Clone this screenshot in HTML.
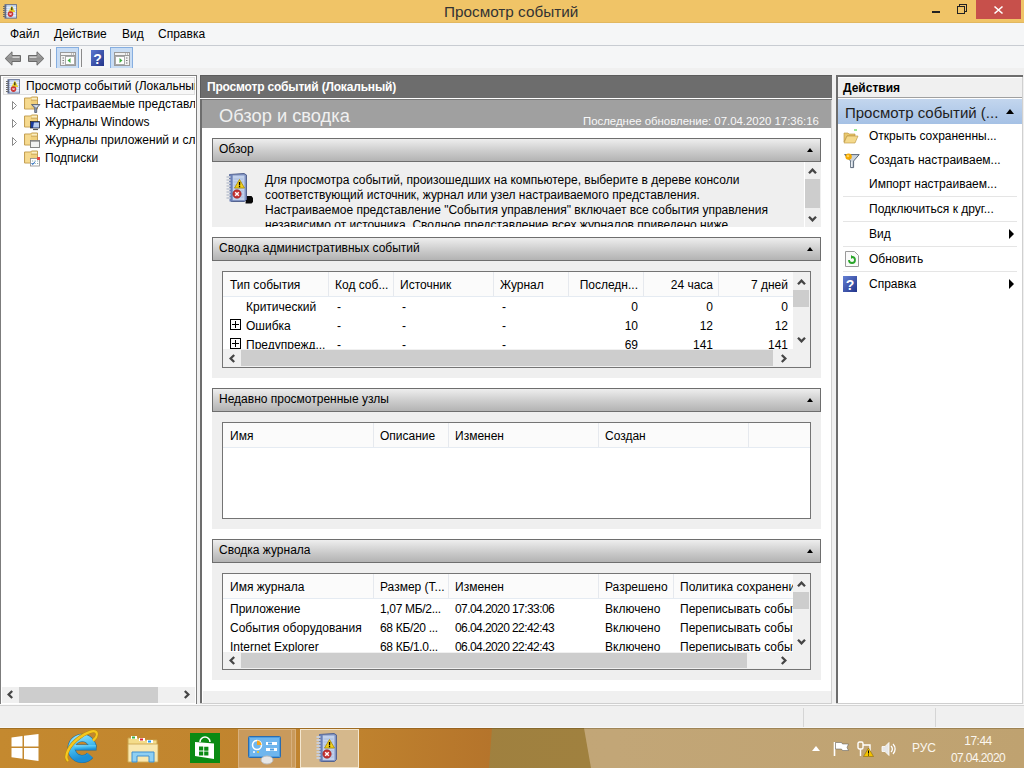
<!DOCTYPE html>
<html><head><meta charset="utf-8">
<style>
*{box-sizing:border-box;margin:0;padding:0}
html,body{width:1024px;height:768px;overflow:hidden;background:#f0f0f0;font-family:"Liberation Sans",sans-serif;font-size:12px;color:#000}
.a{position:absolute}
.t{position:absolute;white-space:nowrap;line-height:14px}
svg{position:absolute;overflow:visible}
.sh{position:absolute;left:212px;width:609px;height:24px;border:1px solid #6e6e6e;background:linear-gradient(#eeeeee,#c9c9c9 60%,#b3b3b3)}
.tri{position:absolute;width:0;height:0;border-left:3.5px solid transparent;border-right:3.5px solid transparent;border-bottom:4px solid #000;margin-left:1px}
.csep{position:absolute;width:1px;height:24px;background:#e6e9ee}
.hdrline{position:absolute;height:1px;background:#e5ebf2}
.r{text-align:right}
.rsep{position:absolute;left:843px;width:174px;height:1px;background:#e5e5e5}
.plus{position:absolute;width:11px;height:11px;border:1px solid #000}
.plus:before{content:"";position:absolute;left:1px;top:4px;width:7px;height:1px;background:#000}
.plus:after{content:"";position:absolute;left:4px;top:1px;width:1px;height:7px;background:#000}

</style></head><body>


<svg width="0" height="0" style="position:absolute">
<defs>
<symbol id="ev" viewBox="0 0 32 32">
 <path d="M5.5 2.5 L20 1.5 L22.5 3 L22.5 27.5 L20.5 29.5 L7 29.5 Z" fill="#8193c2" stroke="#55648f" stroke-width="1"/>
 <rect x="8.5" y="3.5" width="12" height="24.5" fill="#c2d1eb"/>
 <path d="M9.5 7h10M9.5 10h10M9.5 13h10M9.5 16h10M9.5 19h10M9.5 22h10M9.5 25h10" stroke="#a5b7d8" stroke-width="0.8"/>
 <rect x="5.5" y="2.5" width="3" height="27" fill="#6b80b6"/>
 <path d="M2.5 5h4M2.5 8h4M2.5 11h4M2.5 14h4M2.5 17h4M2.5 20h4M2.5 23h4M2.5 26h4" stroke="#c9ced8" stroke-width="1.8"/>
 <path d="M15.5 7.5 L20.5 16 H10.5 Z" fill="#f2d01c" stroke="#a88a00" stroke-width="0.8" stroke-linejoin="round"/>
 <rect x="14.9" y="10" width="1.3" height="3.4" fill="#000"/><rect x="14.9" y="14" width="1.3" height="1.2" fill="#000"/>
 <circle cx="13" cy="22" r="4.2" fill="#c73434" stroke="#8d1a1a" stroke-width="0.6"/>
 <path d="M11.2 20.2l3.6 3.6M14.8 20.2l-3.6 3.6" stroke="#fff" stroke-width="1.4"/>
</symbol>
<symbol id="ev16" viewBox="0 0 16 16">
 <rect x="2.5" y="1.2" width="12.4" height="14.4" fill="#5b6990"/>
 <rect x="4.4" y="2.1" width="9.7" height="12.6" fill="#c9d9f2"/>
 <path d="M4.4 4.6h9.7M4.4 6.6h9.7M4.4 8.6h9.7M4.4 10.6h9.7M4.4 12.6h9.7" stroke="#f2f6fd" stroke-width="0.8"/>
 <path d="M1 3.5h2.6M1 5.5h2.6M1 7.5h2.6M1 9.5h2.6M1 11.5h2.6M1 13.5h2.6" stroke="#6e6e6e" stroke-width="1"/>
 <path d="M9.8 2.4L13.2 8.9H6.4Z" fill="#e6d02a"/>
 <rect x="9.3" y="4.2" width="1.1" height="3" fill="#111"/>
 <circle cx="8.5" cy="11.1" r="2.8" fill="#c83636"/>
 <path d="M7.5 10.1l2 2M9.5 10.1l-2 2" stroke="#fde" stroke-width="1"/>
</symbol>
<symbol id="fold" viewBox="0 0 16 16">
 <path d="M0.5 1.5H6.5L7.5 0.5H13.5V12.5H0.5Z" fill="#f0d07c" stroke="#c39f55"/>
 <path d="M7.8 1.3H13V3.3H7.8Z" fill="#faeec4"/>
 <path d="M7 3.7H13.5" stroke="#c8a55c" stroke-width="0.9"/>
 <rect x="1.3" y="2.3" width="5.5" height="9.5" fill="#f6da90"/>
</symbol>
<symbol id="help" viewBox="0 0 14 16">
 <defs><linearGradient id="hg2" x1="0" y1="0" x2="1" y2="1"><stop offset="0" stop-color="#6480d4"/><stop offset="1" stop-color="#22348a"/></linearGradient></defs>
 <rect x="0" y="0" width="14" height="16" fill="url(#hg2)"/>
 <text x="7" y="13.5" font-family="Liberation Sans" font-size="14" font-weight="bold" fill="#fff" text-anchor="middle">?</text>
</symbol>

<symbol id="cu" viewBox="0 0 9 6"><path d="M1 5.2L4.5 1.6L8 5.2" fill="none" stroke="#454545" stroke-width="2.3"/></symbol>
<symbol id="cd" viewBox="0 0 9 6"><path d="M1 0.8L4.5 4.4L8 0.8" fill="none" stroke="#454545" stroke-width="2.3"/></symbol>
<symbol id="cl" viewBox="0 0 6 9"><path d="M5.2 1L1.6 4.5L5.2 8" fill="none" stroke="#454545" stroke-width="2.3"/></symbol>
<symbol id="cr" viewBox="0 0 6 9"><path d="M0.8 1L4.4 4.5L0.8 8" fill="none" stroke="#454545" stroke-width="2.3"/></symbol>
</defs></svg>

<!-- TITLE BAR -->
<div class="a" style="left:0;top:0;width:1024px;height:23px;background:#f0c467;border-bottom:1px solid #e2b860"></div>
<div class="t" style="left:444px;top:3px;font-size:15.3px;line-height:17px;color:#333">Просмотр событий</div>


<svg style="left:2px;top:3px" width="16" height="16" viewBox="0 0 16 16"><use href="#ev16"/></svg>
<div class="a" style="left:932px;top:11px;width:8px;height:2px;background:#222"></div>
<div class="a" style="left:959px;top:4px;width:8px;height:8px;border:1.5px solid #222"></div>
<div class="a" style="left:957px;top:6px;width:8px;height:8px;border:1.5px solid #222;background:#f0c467"></div>
<div class="a" style="left:976px;top:0;width:45px;height:19px;background:#c7504b"></div>
<svg style="left:994px;top:6px" width="9" height="8"><path d="M0.5 0.5L8.5 7.5M8.5 0.5L0.5 7.5" stroke="#fff" stroke-width="1.6"/></svg>

<!-- MENU BAR -->
<div class="a" style="left:0;top:23px;width:1024px;height:22px;background:#f5f6f7"></div>
<div class="t" style="left:10px;top:27px">Файл</div>
<div class="t" style="left:54px;top:27px">Действие</div>
<div class="t" style="left:122px;top:27px">Вид</div>
<div class="t" style="left:158px;top:27px">Справка</div>
<div class="a" style="left:0;top:45px;width:1024px;height:1px;background:#c8ccd2"></div>

<!-- TOOLBAR -->
<div class="a" style="left:0;top:46px;width:1024px;height:22px;background:#f5f6f7"></div>


<svg style="left:4px;top:50px" width="18" height="17" viewBox="0 0 18 17"><defs><linearGradient id="ag" x1="0" y1="0" x2="0" y2="1"><stop offset="0" stop-color="#b8b8b8"/><stop offset="0.5" stop-color="#8e8e8e"/><stop offset="1" stop-color="#a8a8a8"/></linearGradient></defs><path d="M1.2 8.5L8 1.8V5.5H16.5V11.5H8V15.2Z" fill="url(#ag)" stroke="#6a6a6a" stroke-width="1" stroke-linejoin="round"/><path d="M8.5 6.5H15.5V8H8.5Z" fill="#d0d0d0"/></svg>
<svg style="left:27px;top:50px" width="18" height="17" viewBox="0 0 18 17"><path d="M16.8 8.5L10 1.8V5.5H1.5V11.5H10V15.2Z" fill="url(#ag)" stroke="#6a6a6a" stroke-width="1" stroke-linejoin="round"/><path d="M9.5 6.5H2.5V8H9.5Z" fill="#d0d0d0"/></svg>
<div class="a" style="left:50px;top:49px;width:1px;height:18px;background:#8a8a8a"></div>
<div class="a" style="left:56px;top:47px;width:23px;height:22px;background:#c9ddf4;border:1px solid #86aee0"></div>
<svg style="left:60px;top:52px" width="16" height="14" viewBox="0 0 16 14"><rect x="0.5" y="0.5" width="15" height="13" fill="#f2f2f2" stroke="#9a9a9a"/><path d="M1 3.5H15" stroke="#9a9a9a"/><path d="M11 2h1M13 2h1" stroke="#8a8a8a"/><rect x="5.5" y="4.5" width="9" height="8" fill="#fff" stroke="#aaa"/><path d="M2.5 6h1.5M2.5 8.5h1.5M2.5 11h1.5" stroke="#7a7a7a"/><path d="M10.5 6L7.5 8.5L10.5 11Z" fill="#3fae3f"/></svg>
<div class="a" style="left:81px;top:49px;width:1px;height:18px;background:#8a8a8a"></div>
<svg style="left:91px;top:50px" width="13" height="16" viewBox="0 0 13 16"><defs><linearGradient id="hg" x1="0" y1="0" x2="1" y2="1"><stop offset="0" stop-color="#5c78d0"/><stop offset="1" stop-color="#22348a"/></linearGradient></defs><rect x="0" y="0" width="13" height="16" fill="url(#hg)"/><text x="6.5" y="13.5" font-family="Liberation Sans" font-size="14" font-weight="bold" fill="#fff" text-anchor="middle">?</text></svg>
<div class="a" style="left:110px;top:47px;width:23px;height:22px;background:#c9ddf4;border:1px solid #86aee0"></div>
<svg style="left:114px;top:52px" width="16" height="14" viewBox="0 0 16 14"><rect x="0.5" y="0.5" width="15" height="13" fill="#f2f2f2" stroke="#9a9a9a"/><path d="M1 3.5H15" stroke="#9a9a9a"/><path d="M11 2h1M13 2h1" stroke="#8a8a8a"/><rect x="1.5" y="4.5" width="9" height="8" fill="#fff" stroke="#aaa"/><path d="M12 6h1.5M12 8.5h1.5M12 11h1.5" stroke="#7a7a7a"/><path d="M5.5 6L8.5 8.5L5.5 11Z" fill="#3fae3f"/></svg>
<div class="a" style="left:0;top:68px;width:1024px;height:7px;background:#f0f0f0"></div>

<!-- PANELS -->
<!-- left -->
<div class="a" style="left:0px;top:75px;width:197px;height:630px;background:#fff;border:1px solid #7c7c7c"></div>

<div class="a" style="left:3px;top:77px;width:192px;height:18px;border:1px solid #dedede;background:#f7f7f7"></div>
<svg style="left:5px;top:78px" width="16" height="16" viewBox="0 0 16 16"><use href="#ev16"/></svg>
<div class="a" style="left:26px;top:77px;width:169px;height:18px;overflow:hidden"><div class="t" style="left:0;top:2px">Просмотр событий (Локальный)</div></div>
<div class="a" style="left:20px;top:95px;width:175px;height:72px;overflow:hidden">
 <div class="t" style="left:25px;top:2px">Настраиваемые представления</div>
 <div class="t" style="left:25px;top:20px">Журналы Windows</div>
 <div class="t" style="left:25px;top:38px">Журналы приложений и служб</div>
 <div class="t" style="left:25px;top:56px">Подписки</div>
</div>
<svg style="left:12px;top:101px" width="6" height="50"><path d="M0.5 0.5L4.5 4.5L0.5 8.5Z M0.5 18.5L4.5 22.5L0.5 26.5Z M0.5 36.5L4.5 40.5L0.5 44.5Z" fill="none" stroke="#8a8a8a"/></svg>
<svg style="left:24px;top:96px" width="16" height="17" viewBox="0 0 16 17"><use href="#fold"/><path d="M7.5 8.5h8.5l-3.3 3.6v4.4h-2v-4.4z" fill="#8e9bb0" stroke="#4f5a6e" stroke-width="0.8"/><path d="M9 9.3h5.5l-2 2.2" fill="#dfe6f0"/></svg>
<svg style="left:24px;top:114px" width="16" height="17" viewBox="0 0 16 17"><use href="#fold"/><rect x="6.5" y="7.5" width="9" height="6.5" fill="#1a3a9a" stroke="#222" stroke-width="0.7"/><path d="M10 8.5h5v5h-6z" fill="#b8cdf0"/><path d="M9 15.5h5" stroke="#555" stroke-width="1.2"/></svg>
<svg style="left:24px;top:132px" width="16" height="17" viewBox="0 0 16 17"><use href="#fold"/><rect x="6.5" y="8.5" width="9" height="7" fill="#f2f2f2" stroke="#7a7a7a" stroke-width="0.9"/><path d="M7 9.3h8" stroke="#9a9a9a"/></svg>
<svg style="left:24px;top:150px" width="16" height="17" viewBox="0 0 16 17"><use href="#fold"/><rect x="6.5" y="8.5" width="9" height="7.5" fill="#fff" stroke="#8a8a8a" stroke-width="0.8"/><rect x="13" y="7" width="3" height="3" fill="#e04848"/><path d="M8 11h1.2M10.5 11h1.2M13 11h1.2M8 13.5h1.2M10.5 13.5h1.2M13 13.5h1.2" stroke="#8aa"/><path d="M7.5 13l1.2 1.6l2.3-3" stroke="#2a6fcf" fill="none" stroke-width="1"/></svg>
<!-- left hscroll -->
<div class="a" style="left:2px;top:687px;width:193px;height:16px;background:#f0f0f0"></div>
<div class="a" style="left:19px;top:687px;width:139px;height:16px;background:#cdcdcd"></div>
<svg style="left:7px;top:690px" width="6" height="9"><use href="#cl"/></svg>
<svg style="left:184px;top:690px" width="6" height="9"><use href="#cr"/></svg>

<!-- center -->
<div class="a" style="left:200px;top:75px;width:632px;height:23px;background:#6d6d6d;border-top:1px solid #5c5c5c;border-left:1px solid #5c5c5c"></div>
<div class="t" style="left:207px;top:80px;font-weight:bold;color:#fff;font-size:12px;letter-spacing:-0.18px">Просмотр событий (Локальный)</div>
<div class="a" style="left:200px;top:98px;width:632px;height:606px;background:#fff;border-right:1px solid #d0d0d0;border-bottom:1px solid #cfcfcf"></div>
<div class="a" style="left:200px;top:99px;width:632px;height:1px;background:#7a7a7a"></div>
<div class="a" style="left:200px;top:99px;width:2px;height:604px;background:#6d6d6d"></div>
<div class="a" style="left:202px;top:100px;width:629px;height:28px;background:#a0a0a0"></div>
<div class="t" style="left:219px;top:106px;font-size:18.3px;line-height:20px;color:#f0f0f0">Обзор и сводка</div>
<div class="t" style="left:583px;top:114px;font-size:11.4px;color:#f8f8f8">Последнее обновление: 07.04.2020 17:36:16</div>


<!-- SECTION 1: Obzor -->
<div class="sh" style="top:138px"></div>
<div class="t" style="left:219px;top:142px">Обзор</div>
<div class="tri" style="left:806px;top:148px"></div>
<div class="a" style="left:212px;top:162px;width:609px;height:65px;background:#efefef"></div>
<div class="t" style="left:265px;top:173px;line-height:15px">Для просмотра событий, произошедших на компьютере, выберите в дереве консоли<br>соответствующий источник, журнал или узел настраиваемого представления.<br>Настраиваемое представление "События управления" включает все события управления</div>
<div class="a" style="left:212px;top:218px;width:591px;height:9px;overflow:hidden"><div class="t" style="left:53px;top:0px;line-height:15px">независимо от источника. Сводное представление всех журналов приведено ниже.</div></div>
<!-- vscroll section1 -->
<div class="a" style="left:804px;top:162px;width:1px;height:65px;background:#fff"></div>
<div class="a" style="left:805px;top:179px;width:15px;height:29px;background:#cdcdcd"></div>

<!-- SECTION 2 -->
<div class="sh" style="top:237px"></div>
<div class="t" style="left:219px;top:241px">Сводка административных событий</div>
<div class="tri" style="left:806px;top:247px"></div>
<div class="a" style="left:212px;top:261px;width:609px;height:117px;background:#efefef"></div>
<div class="a" style="left:222px;top:271px;width:589px;height:97px;background:#fff;border:1px solid #747474"></div><div class="a" style="left:223px;top:272px;width:570px;height:24px;background:#fbfbfb"></div>
<div class="hdrline" style="left:223px;top:296px;width:570px"></div>
<div class="csep" style="left:328px;top:272px"></div>
<div class="csep" style="left:393px;top:272px"></div>
<div class="csep" style="left:493px;top:272px"></div>
<div class="csep" style="left:568px;top:272px"></div>
<div class="csep" style="left:643px;top:272px"></div>
<div class="csep" style="left:718px;top:272px"></div>
<div class="t" style="left:230px;top:278px">Тип события</div>
<div class="t" style="left:335px;top:278px">Код соб...</div>
<div class="t" style="left:400px;top:278px">Источник</div>
<div class="t" style="left:500px;top:278px">Журнал</div>
<div class="t r" style="left:538px;top:278px;width:100px">Последн...</div>
<div class="t r" style="left:613px;top:278px;width:100px">24 часа</div>
<div class="t r" style="left:688px;top:278px;width:100px">7 дней</div>
<div class="a" style="left:223px;top:297px;width:570px;height:52px;overflow:hidden">
 <div class="t" style="left:23px;top:3px">Критический</div>
 <div class="t" style="left:114px;top:3px">-</div><div class="t" style="left:179px;top:3px">-</div><div class="t" style="left:279px;top:3px">-</div>
 <div class="t r" style="left:315px;top:3px;width:100px">0</div><div class="t r" style="left:390px;top:3px;width:100px">0</div><div class="t r" style="left:465px;top:3px;width:100px">0</div>
 <div class="plus" style="left:7px;top:22px"></div>
 <div class="t" style="left:23px;top:22px">Ошибка</div>
 <div class="t" style="left:114px;top:22px">-</div><div class="t" style="left:179px;top:22px">-</div><div class="t" style="left:279px;top:22px">-</div>
 <div class="t r" style="left:315px;top:22px;width:100px">10</div><div class="t r" style="left:390px;top:22px;width:100px">12</div><div class="t r" style="left:465px;top:22px;width:100px">12</div>
 <div class="plus" style="left:7px;top:41px"></div>
 <div class="t" style="left:23px;top:41px">Предупрежд...</div>
 <div class="t" style="left:114px;top:41px">-</div><div class="t" style="left:179px;top:41px">-</div><div class="t" style="left:279px;top:41px">-</div>
 <div class="t r" style="left:315px;top:41px;width:100px">69</div><div class="t r" style="left:390px;top:41px;width:100px">141</div><div class="t r" style="left:465px;top:41px;width:100px">141</div>
</div>
<div class="a" style="left:223px;top:349px;width:570px;height:18px;background:#f0f0f0"></div>
<div class="a" style="left:241px;top:350px;width:532px;height:16px;background:#cdcdcd"></div>
<div class="a" style="left:793px;top:272px;width:17px;height:95px;background:#f0f0f0"></div>
<div class="a" style="left:793px;top:290px;width:16px;height:17px;background:#cdcdcd"></div>

<!-- SECTION 3 -->
<div class="sh" style="top:388px"></div>
<div class="t" style="left:219px;top:392px">Недавно просмотренные узлы</div>
<div class="tri" style="left:806px;top:398px"></div>
<div class="a" style="left:212px;top:412px;width:609px;height:117px;background:#efefef"></div>
<div class="a" style="left:222px;top:422px;width:589px;height:97px;background:#fff;border:1px solid #747474"></div><div class="a" style="left:223px;top:423px;width:587px;height:24px;background:#fbfbfb"></div>
<div class="hdrline" style="left:223px;top:447px;width:587px"></div>
<div class="csep" style="left:373px;top:423px"></div>
<div class="csep" style="left:448px;top:423px"></div>
<div class="csep" style="left:598px;top:423px"></div>
<div class="csep" style="left:748px;top:423px"></div>
<div class="t" style="left:230px;top:429px">Имя</div>
<div class="t" style="left:380px;top:429px">Описание</div>
<div class="t" style="left:455px;top:429px">Изменен</div>
<div class="t" style="left:605px;top:429px">Создан</div>

<!-- SECTION 4 -->
<div class="sh" style="top:539px"></div>
<div class="t" style="left:219px;top:543px">Сводка журнала</div>
<div class="tri" style="left:806px;top:549px"></div>
<div class="a" style="left:212px;top:563px;width:609px;height:117px;background:#efefef"></div>
<div class="a" style="left:222px;top:573px;width:589px;height:97px;background:#fff;border:1px solid #747474"></div><div class="a" style="left:223px;top:574px;width:570px;height:24px;background:#fbfbfb"></div>
<div class="hdrline" style="left:223px;top:598px;width:570px"></div>
<div class="csep" style="left:373px;top:574px"></div>
<div class="csep" style="left:448px;top:574px"></div>
<div class="csep" style="left:598px;top:574px"></div>
<div class="csep" style="left:673px;top:574px"></div>
<div class="t" style="left:230px;top:580px">Имя журнала</div>
<div class="t" style="left:380px;top:580px">Размер (Т...</div>
<div class="t" style="left:455px;top:580px">Изменен</div>
<div class="t" style="left:605px;top:580px">Разрешено</div>
<div class="a" style="left:674px;top:574px;width:119px;height:24px;overflow:hidden"><div class="t" style="left:6px;top:6px">Политика сохранения</div></div>
<div class="a" style="left:223px;top:599px;width:570px;height:53px;overflow:hidden">
 <div class="t" style="left:7px;top:3px">Приложение</div><div class="t" style="left:157px;top:3px;letter-spacing:-0.32px">1,07 МБ/2...</div><div class="t" style="left:232px;top:3px;letter-spacing:-0.58px">07.04.2020 17:33:06</div><div class="t" style="left:382px;top:3px">Включено</div><div class="t" style="left:457px;top:3px">Переписывать события</div>
 <div class="t" style="left:7px;top:22px">События оборудования</div><div class="t" style="left:157px;top:22px;letter-spacing:-0.32px">68 КБ/20 ...</div><div class="t" style="left:232px;top:22px;letter-spacing:-0.58px">06.04.2020 22:42:43</div><div class="t" style="left:382px;top:22px">Включено</div><div class="t" style="left:457px;top:22px">Переписывать события</div>
 <div class="t" style="left:7px;top:41px">Internet Explorer</div><div class="t" style="left:157px;top:41px;letter-spacing:-0.32px">68 КБ/1.0...</div><div class="t" style="left:232px;top:41px;letter-spacing:-0.58px">06.04.2020 22:42:43</div><div class="t" style="left:382px;top:41px">Включено</div><div class="t" style="left:457px;top:41px">Переписывать события</div>
</div>
<div class="a" style="left:223px;top:652px;width:570px;height:17px;background:#f0f0f0"></div>
<div class="a" style="left:241px;top:653px;width:506px;height:15px;background:#cdcdcd"></div>
<div class="a" style="left:793px;top:574px;width:17px;height:95px;background:#f0f0f0"></div>
<div class="a" style="left:793px;top:592px;width:16px;height:17px;background:#cdcdcd"></div>
<div class="a" style="left:203px;top:691px;width:628px;height:12px;background:#f0f0f0"></div>


<svg style="left:808px;top:168px" width="9" height="6"><use href="#cu"/></svg>
<svg style="left:808px;top:216px" width="9" height="6"><use href="#cd"/></svg>
<svg style="left:224px;top:172px" width="32" height="32" viewBox="0 0 32 32"><path d="M22 24h5.5l1.5 2v4l-1.5 1.5h-6z" fill="#080808"/><use href="#ev"/></svg>
<svg style="left:797px;top:279px" width="9" height="6"><use href="#cu"/></svg>
<svg style="left:797px;top:337px" width="9" height="6"><use href="#cd"/></svg>
<svg style="left:229px;top:354px" width="6" height="9"><use href="#cl"/></svg>
<svg style="left:781px;top:354px" width="6" height="9"><use href="#cr"/></svg>
<svg style="left:797px;top:581px" width="9" height="6"><use href="#cu"/></svg>
<svg style="left:797px;top:639px" width="9" height="6"><use href="#cd"/></svg>
<svg style="left:229px;top:656px" width="6" height="9"><use href="#cl"/></svg>
<svg style="left:781px;top:656px" width="6" height="9"><use href="#cr"/></svg>

<!-- right -->
<div class="a" style="left:836px;top:75px;width:187px;height:629px;background:#fff;border-right:1px solid #d0d0d0;border-bottom:1px solid #cfcfcf"></div>


<div class="a" style="left:836px;top:75px;width:2px;height:628px;background:#6d6d6d"></div>
<div class="a" style="left:836px;top:75px;width:187px;height:2px;background:#6d6d6d"></div>
<div class="a" style="left:838px;top:78px;width:184px;height:19px;background:#f0f0f0"></div>
<div class="t" style="left:843px;top:81px;font-weight:bold">Действия</div>
<div class="a" style="left:838px;top:97px;width:184px;height:1px;background:#a0a0a0"></div>
<div class="a" style="left:838px;top:99px;width:184px;height:25px;background:linear-gradient(#c3d6ee,#a5c1e5)"></div>
<div class="t" style="left:845px;top:104px;font-size:15px;line-height:17px;color:#1e1e1e">Просмотр событий (...</div>
<div class="a" style="left:1006px;top:109px;width:0;height:0;border-left:4.5px solid transparent;border-right:4.5px solid transparent;border-bottom:5px solid #000"></div>
<div class="t" style="left:869px;top:129px">Открыть сохраненны...</div>
<div class="t" style="left:869px;top:153px">Создать настраиваем...</div>
<div class="t" style="left:869px;top:177px">Импорт настраиваем...</div>
<div class="rsep" style="top:196px"></div>
<div class="t" style="left:869px;top:202px">Подключиться к друг...</div>
<div class="rsep" style="top:221px"></div>
<div class="t" style="left:869px;top:227px">Вид</div>
<div class="rsep" style="top:246px"></div>
<div class="t" style="left:869px;top:252px">Обновить</div>
<div class="rsep" style="top:271px"></div>
<div class="t" style="left:869px;top:277px">Справка</div>
<div class="a" style="left:1009px;top:229px;width:0;height:0;border-top:5px solid transparent;border-bottom:5px solid transparent;border-left:5px solid #000"></div>
<div class="a" style="left:1009px;top:279px;width:0;height:0;border-top:5px solid transparent;border-bottom:5px solid transparent;border-left:5px solid #000"></div>
<svg style="left:843px;top:129px" width="16" height="15" viewBox="0 0 16 15"><path d="M1 4h4l1 1h6v2H4L1 13z" fill="#e8c870" stroke="#b8913a" stroke-width="0.6"/><path d="M4 7h11l-3 7H1z" fill="#f4d98c" stroke="#b8913a" stroke-width="0.6"/><path d="M11 1h3" stroke="#3c3"/></svg>
<svg style="left:844px;top:153px" width="16" height="16" viewBox="0 0 16 16"><path d="M0.6 1.6H15.2L9.6 8V14.6H6.6V8Z" fill="#c9d2dc" stroke="#5a6778" stroke-width="1"/><path d="M7.4 8.5V14" stroke="#f4f6f8" stroke-width="0.9"/><circle cx="4.6" cy="3.6" r="3.2" fill="#f4a900"/><circle cx="4" cy="3" r="1.3" fill="#ffd257"/></svg>
<svg style="left:845px;top:251px" width="14" height="16" viewBox="0 0 14 16"><path d="M0.5 0.5h9l4 4v11h-13z" fill="#fafafa" stroke="#9a9a9a"/><path d="M4 9a3 3 0 1 0 3-3" fill="none" stroke="#2aa52a" stroke-width="1.8"/><path d="M6 4l2.5 2l-2.5 2z" fill="#2aa52a"/></svg>
<svg style="left:843px;top:276px" width="14" height="16" viewBox="0 0 14 16"><use href="#help"/></svg>

<!-- STATUS BAR -->
<div class="a" style="left:0;top:705px;width:1024px;height:23px;background:#f0f0f0"></div>

<!-- TASKBAR -->
<div class="a" style="left:0;top:728px;width:1024px;height:40px;background:linear-gradient(90deg,#c4892f 0%,#bf822e 35%,#b5742b 48%)"></div>
<div class="a" style="left:0;top:728px;width:1024px;height:40px;background:linear-gradient(90deg,#9c7e3f,#a3833f);clip-path:polygon(492px 0,1024px 0,1024px 40px,489px 40px)"></div>
<div class="a" style="left:0;top:728px;width:1024px;height:40px;background:linear-gradient(90deg,#c0a574,#c2a677 60%,#bfa270);clip-path:polygon(584px 0,1024px 0,1024px 40px,591px 40px)"></div>


<div class="a" style="left:0;top:704px;width:1024px;height:1px;background:#fafafa"></div><div class="a" style="left:0;top:705px;width:1024px;height:1px;background:#d4d4d4"></div><div class="a" style="left:0;top:727px;width:1024px;height:1px;background:#f7f7f7"></div><div class="a" style="left:0;top:728px;width:1024px;height:1px;background:rgba(60,40,0,0.25)"></div>
<div class="a" style="left:803px;top:708px;width:1px;height:19px;background:#d5d5d5"></div>
<div class="a" style="left:935px;top:708px;width:1px;height:19px;background:#d5d5d5"></div>

<svg style="left:11px;top:734px" width="28" height="27" viewBox="0 0 28 27"><path d="M0.5 3.5L11.5 2V12.5H0.5Z M13 1.8L27.5 0V12.5H13Z M0.5 14H11.5V24.8L0.5 23.3Z M13 14H27.5V27L13 25Z" fill="#fff"/></svg>
<svg style="left:60px;top:728px" width="40" height="40" viewBox="0 0 40 40"><defs><linearGradient id="ieg" x1="0" y1="0" x2="0.3" y2="1"><stop offset="0" stop-color="#8ee0fb"/><stop offset="0.5" stop-color="#45bdf0"/><stop offset="1" stop-color="#1d8fd6"/></linearGradient></defs>
<path d="M32.6 19.5A10.6 10.6 0 1 0 30.1 27.3" fill="none" stroke="#1f6f9f" stroke-width="8"/>
<rect x="14" y="16.5" width="22.5" height="6" fill="#1f6f9f"/>
<path d="M32.6 19.5A10.6 10.6 0 1 0 30.1 27.3" fill="none" stroke="url(#ieg)" stroke-width="6.8"/>
<rect x="14.6" y="17.1" width="21.3" height="4.8" fill="url(#ieg)"/>
<path d="M8 33C3.5 28.5 9 17 19.5 9.5C27 4 34.5 1.5 36.5 4.5C38 7 35.5 10.5 33 12.5" fill="none" stroke="#b88a10" stroke-width="3.4"/>
<path d="M8 33C3.5 28.5 9 17 19.5 9.5C27 4 34.5 1.5 36.5 4.5C38 7 35.5 10.5 33 12.5" fill="none" stroke="#f6c81e" stroke-width="2.3"/>
</svg>
<svg style="left:127px;top:735px" width="32" height="28" viewBox="0 0 32 28"><path d="M1 3h10l2 2h17v22H1z" fill="#f4dc8a" stroke="#c9a14d"/><rect x="4" y="1" width="6" height="3" fill="#fff"/><rect x="5" y="1.5" width="3" height="2" fill="#3cb043"/><rect x="12" y="3" width="6" height="3" fill="#fff"/><rect x="13" y="3.5" width="3" height="2" fill="#d23"/><rect x="20" y="5" width="6" height="3" fill="#fff"/><rect x="21" y="5.5" width="3" height="2" fill="#29e"/><path d="M1 9h30v18H1z" fill="#f9e8b0" stroke="#c9a14d" stroke-width="0.8"/><path d="M5 27V17h22v10h-5v-6H10v6z" fill="#8ecff3" stroke="#3f8fd0"/></svg>
<div class="a" style="left:190px;top:733px;width:30px;height:30px;background:#0b8a13"></div>
<svg style="left:190px;top:733px" width="30" height="30" viewBox="0 0 30 30"><path d="M10 9a5 5 0 0 1 10 0" stroke="#fff" stroke-width="1.6" fill="none"/><path d="M5 9L24 10.5V26L5 23z" fill="#fff"/><path d="M9 13.5h4.2v4h-4.2z M14.2 13.7h4.2v4h-4.2z M9 18.5h4.2v4h-4.2z M14.2 18.5h4.2v4h-4.2z" fill="#0b8a13"/></svg>
<div class="a" style="left:238px;top:729px;width:54px;height:39px;background:#c99a5c;border:1px solid #d8b07c"></div>
<div class="a" style="left:292px;top:729px;width:4px;height:39px;background:#c99a5c;border:1px solid #d8b07c;border-left:none"></div>
<svg style="left:248px;top:736px" width="33" height="28" viewBox="0 0 33 28"><rect x="0.5" y="0.5" width="32" height="21" rx="1" fill="#4e9ee0" stroke="#2a6cb0"/><rect x="2" y="2" width="29" height="18" fill="#6fb6ee"/><circle cx="9" cy="9" r="4.5" fill="none" stroke="#fff" stroke-width="1.5"/><path d="M9 4.5A4.5 4.5 0 0 1 13.5 9H9z" fill="#f5a623"/><rect x="18" y="6" width="11" height="3" fill="#fff"/><rect x="18" y="12" width="11" height="3" fill="#fff"/><rect x="20" y="6.5" width="4" height="2" fill="#4e9ee0"/><rect x="22" y="12.5" width="4" height="2" fill="#4e9ee0"/><circle cx="6" cy="16" r="1" fill="#fff"/><circle cx="10" cy="16" r="1" fill="#f5c623"/><ellipse cx="19" cy="24" rx="6" ry="4" fill="#e6e6e6" stroke="#bbb"/></svg>
<div class="a" style="left:300px;top:729px;width:59px;height:39px;background:#d5b88c;border:1px solid #f3e6cf"></div>
<svg style="left:314px;top:732px" width="32" height="32" viewBox="0 0 32 32"><use href="#ev"/></svg>
<div class="a" style="left:812px;top:746px;width:0;height:0;border-left:4.5px solid transparent;border-right:4.5px solid transparent;border-bottom:5px solid #fff"></div>
<svg style="left:833px;top:741px" width="16" height="16" viewBox="0 0 16 16"><path d="M1.5 1v14" stroke="#fff" stroke-width="1.6"/><path d="M2.5 1.5h6l1 1.5h6l-1.5 3.5l1.5 3h-6l-1-1.5h-6z" fill="#fff" stroke="#555" stroke-width="0.5"/></svg>
<svg style="left:857px;top:741px" width="17" height="16" viewBox="0 0 17 16"><rect x="1" y="1" width="5" height="7" rx="1.5" fill="none" stroke="#fff" stroke-width="1.4"/><path d="M3.5 8v7M6 4h7v6" stroke="#fff" stroke-width="1.4" fill="none"/><path d="M11.5 7L16.5 15.5H6.5Z" fill="#f5c400" stroke="#7a5a00" stroke-width="0.5"/><path d="M11.5 9.5v3M11.5 13.5v1" stroke="#000"/></svg>
<svg style="left:881px;top:742px" width="16" height="14" viewBox="0 0 16 14"><path d="M1 4.5h3l4-4v13l-4-4H1z" fill="#e8e8e8" stroke="#fff" stroke-width="0.8"/><path d="M10 4a4 4 0 0 1 0 6M12 2a7 7 0 0 1 0 10" stroke="#fff" stroke-width="1.3" fill="none"/></svg>
<div class="t" style="left:912px;top:741px;color:#fbf7ef;font-size:12px">РУС</div>
<div class="t" style="left:938px;top:734px;width:80px;text-align:center;color:#fbf7ef;font-size:12px;letter-spacing:-0.5px">17:44</div>
<div class="t" style="left:938px;top:751px;width:80px;text-align:center;color:#fbf7ef;font-size:12px;letter-spacing:-0.6px">07.04.2020</div>

</body></html>
